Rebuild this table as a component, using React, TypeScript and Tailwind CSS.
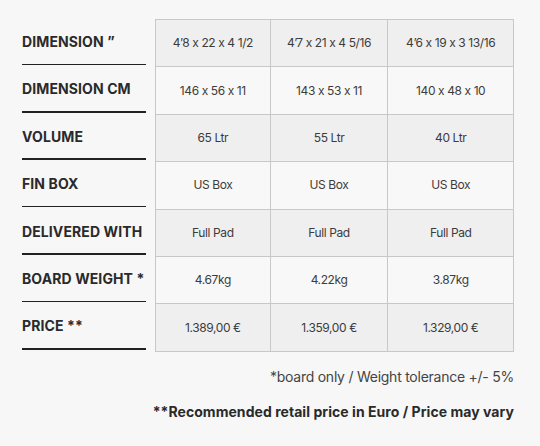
import React from "react";

const rows = [
  { label: "DIMENSION \u201D", values: ["4\u20198 x 22 x 4 1/2", "4\u20197 x 21 x 4 5/16", "4\u20196 x 19 x 3 13/16"], shade: true },
  { label: "DIMENSION CM", values: ["146 x 56 x 11", "143 x 53 x 11", "140 x 48 x 10"], shade: false },
  { label: "VOLUME", values: ["65 Ltr", "55 Ltr", "40 Ltr"], shade: true },
  { label: "FIN BOX", values: ["US Box", "US Box", "US Box"], shade: false },
  { label: "DELIVERED WITH", values: ["Full Pad", "Full Pad", "Full Pad"], shade: true },
  { label: "BOARD WEIGHT *", values: ["4.67kg", "4.22kg", "3.87kg"], shade: false },
  { label: "PRICE **", values: ["1.389,00 \u20AC", "1.359,00 \u20AC", "1.329,00 \u20AC"], shade: true },
];

const widths = ["w-[115px]", "w-[118px]", "w-[126px]"];

export default function App() {
  return (
    <div className="w-[540px] h-[446px] bg-[#f7f7f7] pt-[19px] pl-[22px] font-['Inter','Liberation_Sans',sans-serif]">
      <div className="flex gap-[9px]">
        <div className="flex flex-col w-[124px]">
          {rows.map((r, i) => (
            <div key={i} className="h-[47.4px] flex flex-col">
              <div className="flex-1 pt-[14px] text-[14px] leading-[17px] font-bold text-[#2a2a2a] tracking-[0.1px] whitespace-nowrap">
                {r.label}
              </div>
              <div className="h-[1.5px] bg-[#222] mb-[1.2px]" />
            </div>
          ))}
        </div>
        <div className="flex flex-col border-t border-l border-[#c8c8c8] w-[359px]">
          {rows.map((r, i) => (
            <div key={i} className={`flex h-[47.4px] border-b border-[#c8c8c8] ${r.shade ? "bg-[#efefef]" : "bg-[#f8f8f8]"}`}>
              {r.values.map((v, j) => (
                <div
                  key={j}
                  className={`${widths[j]} ${j === 0 ? "w-[114px]" : ""} border-r border-[#c8c8c8] flex items-center justify-center text-[12px] text-[#3c3c3c] tracking-[-0.4px] whitespace-nowrap`}
                >
                  {v}
                </div>
              ))}
            </div>
          ))}
        </div>
      </div>
      <div className="w-[492px] flex flex-col items-end">
        <div className="mt-[15px] text-[14px] leading-[19px] text-[#444] tracking-[-0.25px]">
          *board only / Weight tolerance +/- 5%
        </div>
        <div className="mt-[16px] text-[14px] leading-[19px] font-bold text-[#2a2a2a] tracking-[0.05px]">
          **Recommended retail price in Euro / Price may vary
        </div>
      </div>
    </div>
  );
}
